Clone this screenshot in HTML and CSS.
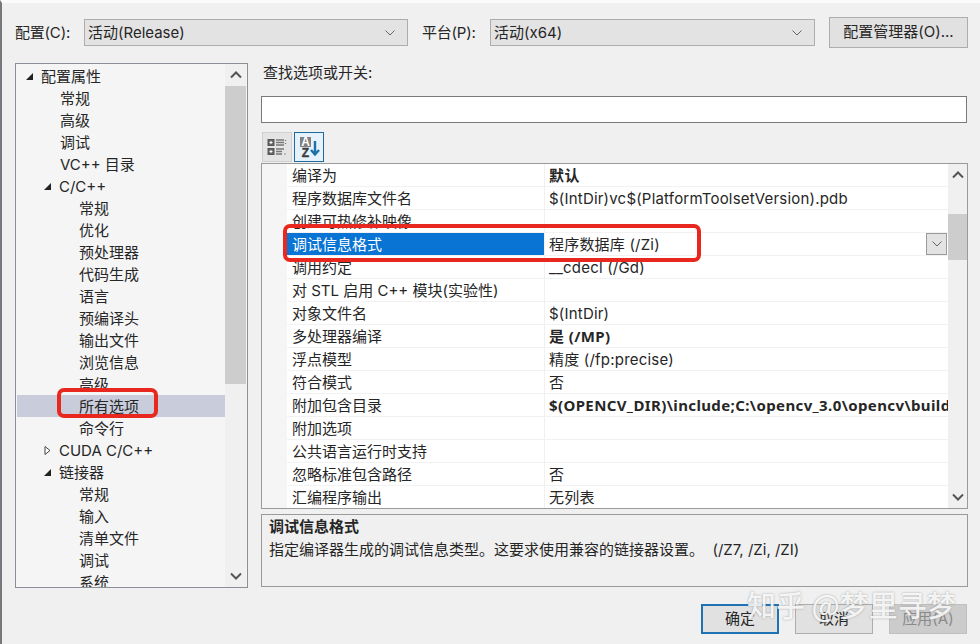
FILE: index.html
```html
<!DOCTYPE html>
<html lang="zh-CN">
<head>
<meta charset="utf-8">
<title>属性页</title>
<link rel="stylesheet" href="styles.css">
</head>
<body>
<div class="window">
  <div class="topbar">
    <span class="label">配置(C):</span>
    <div class="select select-config"><span>活动(Release)</span><svg class="chev" viewBox="0 0 10 6"><path d="M.5.5 5 5 9.500.5" /></svg></div>
    <span class="label label-platform">平台(P):</span>
    <div class="select select-platform"><span>活动(x64)</span><svg class="chev" viewBox="0 0 10 6"><path d="M.5.5 5 5 9.500.5" /></svg></div>
    <div class="btn btn-manager">配置管理器(O)...</div>
  </div>
  <div class="main">
    <div class="tree">
      <div class="tree-list">
        <div class="node l0"><svg class="tw" viewBox="0 0 9 9"><path class="open" d="M8 1v7H1z"/></svg>配置属性</div>
        <div class="node l1">常规</div>
        <div class="node l1">高级</div>
        <div class="node l1">调试</div>
        <div class="node l1">VC++ 目录</div>
        <div class="node l1a"><svg class="tw" viewBox="0 0 9 9"><path class="open" d="M8 1v7H1z"/></svg>C/C++</div>
        <div class="node l2">常规</div>
        <div class="node l2">优化</div>
        <div class="node l2">预处理器</div>
        <div class="node l2">代码生成</div>
        <div class="node l2">语言</div>
        <div class="node l2">预编译头</div>
        <div class="node l2">输出文件</div>
        <div class="node l2">浏览信息</div>
        <div class="node l2">高级</div>
        <div class="node l2 selected">所有选项</div>
        <div class="node l2">命令行</div>
        <div class="node l1a"><svg class="tw" viewBox="0 0 9 9"><path class="closed" d="M2 .5 7 4.500 2 8.500z"/></svg>CUDA C/C++</div>
        <div class="node l1a"><svg class="tw" viewBox="0 0 9 9"><path class="open" d="M8 1v7H1z"/></svg>链接器</div>
        <div class="node l2">常规</div>
        <div class="node l2">输入</div>
        <div class="node l2">清单文件</div>
        <div class="node l2">调试</div>
        <div class="node l2">系统</div>
      </div>
      <div class="scroll tree-scroll">
        <svg class="sarrow" viewBox="0 0 12 8"><path d="M1 6.500 6 1.500l5 5"/></svg>
        <div class="track"><div class="thumb"></div></div>
        <svg class="sarrow" viewBox="0 0 12 8"><path d="M1 1.500l5 5 5-5"/></svg>
      </div>
    </div>
    <div class="right">
      <div class="search-label">查找选项或开关:</div>
      <div class="input"></div>
      <div class="toolbar">
        <div class="tool">
          <svg viewBox="0 0 20 20" class="ticon">
            <rect class="bx" x="1" y="2.500" width="6" height="6"/><path class="pl" d="M2.500 5.500h3M4 4v3"/>
            <rect class="bx" x="1" y="11.500" width="6" height="6"/><path class="pl" d="M2.500 14.500h3M4 13v3"/>
            <path class="ln" d="M9 3h8M9 5.500h8M9 8h8M9 12h8M9 14.500h6M9 17h6"/>
            <path class="dt" d="M18.500 3v1M18.500 6v1M17.500 17h1"/>
          </svg>
        </div>
        <div class="tool tool-on">
          <svg viewBox="0 0 22 22" class="ticon ticon-sort">
            <rect x="2" y="1" width="11" height="10" fill="#808080"/>
            <text x="7.500" y="9.800" class="az az-a">A</text>
            <text x="7.500" y="20.500" class="az">Z</text>
            <path class="arrow" d="M17 5v13M13 14l4 4.500 4-4.500"/>
          </svg>
        </div>
      </div>
      <div class="grid">
        <div class="rows">
          <div class="row"><div class="gut"></div><div class="name">编译为</div><div class="val b">默认</div></div>
          <div class="row"><div class="gut"></div><div class="name">程序数据库文件名</div><div class="val">$(IntDir)vc$(PlatformToolsetVersion).pdb</div></div>
          <div class="row"><div class="gut"></div><div class="name">创建可热修补映像</div><div class="val"></div></div>
          <div class="row"><div class="gut"></div><div class="name active">调试信息格式</div><div class="val">程序数据库 (/Zi)<div class="ddbtn"><svg class="chev" viewBox="0 0 10 6"><path d="M.5.5 5 5 9.500.5" /></svg></div></div></div>
          <div class="row"><div class="gut"></div><div class="name">调用约定</div><div class="val">__cdecl (/Gd)</div></div>
          <div class="row"><div class="gut"></div><div class="name">对 STL 启用 C++ 模块(实验性)</div><div class="val"></div></div>
          <div class="row"><div class="gut"></div><div class="name">对象文件名</div><div class="val">$(IntDir)</div></div>
          <div class="row"><div class="gut"></div><div class="name">多处理器编译</div><div class="val b">是 (/MP)</div></div>
          <div class="row"><div class="gut"></div><div class="name">浮点模型</div><div class="val">精度 (/fp:precise)</div></div>
          <div class="row"><div class="gut"></div><div class="name">符合模式</div><div class="val">否</div></div>
          <div class="row"><div class="gut"></div><div class="name">附加包含目录</div><div class="val b">$(OPENCV_DIR)\include;C:\opencv_3.0\opencv\build\include</div></div>
          <div class="row"><div class="gut"></div><div class="name">附加选项</div><div class="val"></div></div>
          <div class="row"><div class="gut"></div><div class="name">公共语言运行时支持</div><div class="val"></div></div>
          <div class="row"><div class="gut"></div><div class="name">忽略标准包含路径</div><div class="val">否</div></div>
          <div class="row"><div class="gut"></div><div class="name">汇编程序输出</div><div class="val">无列表</div></div>
        </div>
        <div class="scroll grid-scroll">
          <svg class="sarrow" viewBox="0 0 12 8"><path d="M1 6.500 6 1.500l5 5"/></svg>
          <div class="track"><div class="thumb"></div></div>
          <svg class="sarrow" viewBox="0 0 12 8"><path d="M1 1.500l5 5 5-5"/></svg>
        </div>
      </div>
      <div class="desc">
        <div class="desc-title">调试信息格式</div>
        <div class="desc-text">指定编译器生成的调试信息类型。这要求使用兼容的链接器设置。 &nbsp;(/Z7, /Zi, /ZI)</div>
      </div>
    </div>
  </div>
  <div class="footer">
    <div class="btn btn-foot btn-ok">确定</div>
    <div class="btn btn-foot">取消</div>
    <div class="btn btn-foot btn-off">应用(A)</div>
  </div>
</div>
<div class="mark mark-a"></div>
<div class="mark mark-b"></div>
<div class="watermark">知乎 @梦里寻梦</div>
</body>
</html>
```
FILE: styles.css
```css
* { box-sizing: border-box; }
html, body { margin: 0; padding: 0; }
body {
  width: 980px; height: 644px; overflow: hidden; position: relative;
  background: #f0f0f0; color: #262626;
  font: 15px/22px "Inter", "Noto Sans CJK SC", sans-serif;
}
.window {
  height: 644px; padding: 14px 0 0 13px;
  border-top: 3px solid #fbfbfb; border-left: 2px solid #77777c;
}
.topbar { display: flex; align-items: center; height: 30px; }
.label { width: 69px; padding-top: 1px; letter-spacing: -.2px; }
.label-platform { width: 68px; margin-left: 14px; }
.select {
  height: 27px; margin-top: 1px; display: flex; align-items: center; justify-content: space-between;
  padding: 0 12px 0 3px; background: #e3e3e3; border: 1px solid #adadad;
}
.select-config { width: 324px; }
.select-platform { width: 325px; }
.chev { width: 10px; height: 6px; fill: none; stroke: #666; stroke-width: 1; }
.btn { display: flex; align-items: center; justify-content: center; background: #e1e1e1; border: 1px solid #adadad; }
.btn-manager { width: 139px; height: 31px; margin-left: 14px; }
.main { display: flex; margin-top: 16px; }
.tree {
  width: 233px; height: 525px; display: flex; overflow: hidden;
  background: #f5f5f6; border: 1px solid #8a8f96;
}
.tree-list { width: 209px; padding: 1px 0 0 1px; }
.node { height: 22px; padding-top: 1px; white-space: nowrap; display: flex; align-items: center; }
.l0 { padding-left: 8px; }
.l1 { padding-left: 43px; }
.l1a { padding-left: 26px; }
.l2 { padding-left: 62px; }
.selected { background: #c9cddb; }
.tw { width: 9px; height: 9px; margin-right: 7px; flex: none; }
.open { fill: #222; }
.closed { fill: #fff; stroke: #444; stroke-width: 1; }
.scroll { display: flex; flex-direction: column; flex: none; background: #f0f0f0; }
.tree-scroll { width: 21px; }
.sarrow { width: 12px; height: 8px; margin: 7px auto; fill: none; stroke: #555; stroke-width: 2; flex: none; }
.track { flex: 1; }
.thumb { background: #cdcdcd; }
.tree-scroll .thumb { height: 298px; }
.right { width: 707px; margin-left: 13px; }
.search-label { height: 33px; line-height: 20px; padding: 0 0 0 2px; }
.input { width: 706px; height: 27px; background: #fff; border: 1px solid #7a7a7a; }
.toolbar { display: flex; gap: 2px; margin: 9px 0 1px 1px; }
.tool {
  width: 30px; height: 30px; display: flex; align-items: center; justify-content: center;
  background: #e4e4e4; border: 1px solid #d0d0d0;
}
.tool-on { background: #e5f1fb; border-color: #1f6a9c; }
.ticon { width: 20px; height: 20px; }
.ticon-sort { width: 22px; height: 22px; }
.bx { fill: #666; stroke: #555; stroke-width: 1; }
.pl { stroke: #fff; stroke-width: 1; fill: none; }
.ln { stroke: #777; stroke-width: 1.300; fill: none; }
.dt { stroke: #777; stroke-width: 1.300; fill: none; }
.az { font: 700 12px "Liberation Sans", sans-serif; fill: #3c3c3c; stroke: #3c3c3c; stroke-width: .4; text-anchor: middle; }
.az-a { fill: #fff; stroke: none; }
.arrow { fill: none; stroke: #1c6fa8; stroke-width: 2.400; }
.grid {
  width: 707px; height: 346px; display: flex; overflow: hidden;
  background: #fff; border: 1px solid #9a9a9a;
}
.rows { width: 686px; flex: none; }
.row { height: 23px; display: flex; border-bottom: 1px solid #f2f2f2; line-height: 24px; }
.gut { width: 25px; background: #f5f5f5; flex: none; margin-bottom: -1px; }
.name { width: 258px; flex: none; padding: 0 0 0 5px; white-space: nowrap; overflow: hidden; border-right: 1px solid #f0f0f0; }
.active { background: #0a74d4; color: #fff; height: 22px; }
.val { flex: 1; min-width: 0; padding-left: 4px; white-space: nowrap; overflow: hidden; position: relative; letter-spacing: .2px; }
.b { font: 700 15px/22px "Noto Sans", "Noto Sans CJK SC", sans-serif; letter-spacing: .38px; }
.ddbtn {
  position: absolute; right: 1px; top: 0; width: 21px; height: 22px;
  display: flex; align-items: center; justify-content: center;
  background: #e3e3e3; border: 1px solid #9a9a9a;
}
.grid-scroll { width: 19px; }
.grid-scroll .track { padding-top: 28px; }
.grid-scroll .thumb { height: 46px; }
.desc {
  width: 707px; height: 73px; margin-top: 5px; padding: 1px 7px;
  border: 1px solid #9a9a9a; background: #f0f0f0;
}
.desc-title { font-weight: 700; height: 23px; }
.footer { display: flex; gap: 16px; margin: 16px 0 0 686px; }
.btn-foot { width: 78px; height: 30px; }
.btn-ok { border: 2px solid #1f73b3; }
.btn-off { background: #cccccc; border-color: #bfbfbf; color: #8a8a8a; }
.mark { position: absolute; border: 4px solid #e8281f; border-radius: 7px; }
.mark-a { left: 283px; top: 224px; width: 418px; height: 38px; }
.mark-b { left: 57px; top: 388px; width: 101px; height: 30px; }
.watermark {
  position: absolute; left: 747px; top: 586px; white-space: nowrap;
  font: 500 29px/36px "Noto Sans CJK SC", sans-serif; color: rgba(255,255,255,.88);
  text-shadow: 0 0 2px rgba(90,90,90,.55);
}
```
